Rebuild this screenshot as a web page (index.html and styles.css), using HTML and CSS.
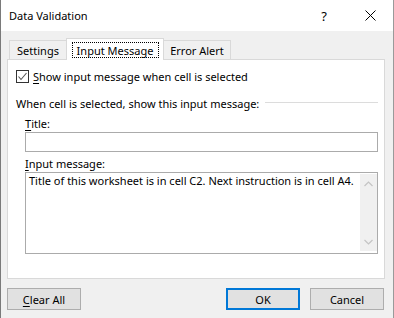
FILE: index.html
```html
<!DOCTYPE html>
<html>
<head>
    <title>Data Validation</title>
    <link rel="stylesheet" href="styles.css">
</head>
<body>
    <div class="window">
        <div class="title-bar">
            <span class="title">Data Validation</span>
            <div class="caption-buttons">
                <span class="caption-btn">?</span>
                <span class="caption-btn">
                    <svg width="11" height="11" viewBox="0 0 11 11">
                        <path d="M0.5 0.5 L10.5 10.5 M10.5 0.5 L0.5 10.5" stroke="#000" stroke-width="1" fill="none"/>
                    </svg>
                </span>
            </div>
        </div>

        <div class="main">
            <div class="tabs">
                <div class="tab tab-first">Settings</div>
                <div class="tab tab-active"><span class="focus">Input Message</span></div>
                <div class="tab tab-last">Error Alert</div>
            </div>

            <div class="panel">
                <div class="check-row">
                    <span class="checkbox">
                        <svg width="11" height="11" viewBox="0 0 11 11">
                            <polyline points="1.5,5.5 4,8.5 9.5,2" stroke="#555" stroke-width="1.1" fill="none"/>
                        </svg>
                    </span>
                    <span class="check-label"><u>S</u>how input message when cell is selected</span>
                </div>

                <div class="group-head">
                    <span>When cell is selected, show this input message:</span>
                    <span class="group-line"></span>
                </div>

                <div class="group-body">
                    <div class="field-label label-title"><u>T</u>itle:</div>
                    <div class="text-input"></div>

                    <div class="field-label label-msg"><u>I</u>nput message:</div>
                    <div class="msg-box">
                        <div class="msg-text">Title of this worksheet is in cell C2. Next instruction is in cell A4.</div>
                        <div class="scrollbar">
                            <svg width="9" height="6" viewBox="0 0 9 6">
                                <polyline points="0.5,5 4.5,1 8.5,5" stroke="#c4c4c4" stroke-width="1.2" fill="none"/>
                            </svg>
                            <svg width="9" height="6" viewBox="0 0 9 6">
                                <polyline points="0.5,1 4.5,5 8.5,1" stroke="#c4c4c4" stroke-width="1.2" fill="none"/>
                            </svg>
                        </div>
                    </div>
                </div>
            </div>

            <div class="button-row">
                <button class="btn"><u>C</u>lear All</button>
                <div class="spacer"></div>
                <button class="btn btn-default">OK</button>
                <button class="btn btn-cancel">Cancel</button>
            </div>
        </div>
    </div>
</body>
</html>
```
FILE: styles.css
```css
body {
    margin: 0;
    background-color: #f0f0f0;
    font-family: "Noto Sans", sans-serif;
    font-size: 11px;
    color: #000;
}

u {
    text-decoration: underline;
    text-underline-offset: 2px;
}

.window {
    width: 394px;
    height: 318px;
    box-sizing: border-box;
    border-left: 1px solid #7a7a7a;
    border-right: 1px solid #9a9a9a;
    background-color: #f0f0f0;
    overflow: hidden;
}

/* title bar */

.title-bar {
    height: 31px;
    background-color: #fff;
    display: flex;
    align-items: center;
    justify-content: space-between;
}

.title {
    padding-left: 8px;
    font-size: 11px;
    padding-bottom: 1px;
}

.caption-buttons {
    display: flex;
    height: 31px;
}

.caption-btn {
    width: 46px;
    height: 31px;
    display: flex;
    align-items: center;
    justify-content: center;
    font-size: 13px;
}

.caption-btn svg {
    margin-top: -1px;
}

/* tabs */

.main {
    padding: 7px 8px 0 6px;
}

.tabs {
    display: flex;
    align-items: flex-end;
    height: 21px;
    padding-left: 2px;
}

.tab {
    height: 19px;
    box-sizing: border-box;
    border: 1px solid #d9d9d9;
    border-bottom: none;
    display: flex;
    align-items: center;
    justify-content: center;
    padding-top: 1px;
    white-space: nowrap;
    background-color: #f0f0f0;
}

.tab-first {
    width: 57px;
    border-right: none;
}

.tab-active {
    width: 98px;
    height: 22px;
    margin-bottom: -1px;
    background-color: #fff;
    position: relative;
    z-index: 1;
    align-items: flex-start;
    padding-top: 3px;
}

.tab-last {
    width: 67px;
    border-left: none;
}

.focus {
    width: 87px;
    height: 16px;
    box-sizing: border-box;
    border: 1px dotted #000;
    display: flex;
    align-items: center;
    justify-content: center;
    white-space: nowrap;
}

/* panel */

.panel {
    height: 220px;
    box-sizing: border-box;
    border: 1px solid #d9d9d9;
    background-color: #fff;
    padding: 10px 6px 0 0;
}

.check-row {
    display: flex;
    align-items: center;
    height: 13px;
    padding-left: 8px;
}

.checkbox {
    width: 13px;
    height: 13px;
    box-sizing: border-box;
    border: 1px solid #333;
    background-color: #fff;
    display: flex;
    align-items: center;
    justify-content: center;
}

.check-label {
    margin-left: 4px;
}

.group-head {
    display: flex;
    align-items: center;
    height: 16px;
    margin-top: 12px;
    padding-left: 8px;
}

.group-line {
    flex: 1;
    height: 1px;
    margin-left: 6px;
    margin-top: -1px;
    background-color: #dcdcdc;
}

.group-body {
    padding-left: 17px;
}

.field-label {
    height: 16px;
    display: flex;
    align-items: center;
}

.label-title {
    margin-top: 4px;
}

.label-msg {
    margin-top: 3px;
}

.text-input {
    height: 20px;
    margin-top: 1px;
    box-sizing: border-box;
    border: 1px solid #ababab;
    background-color: #fff;
}

.msg-box {
    height: 82px;
    margin-top: 1px;
    box-sizing: border-box;
    border: 1px solid #ababab;
    background-color: #fff;
    display: flex;
}

.msg-text {
    flex: 1;
    padding: 0 3px;
    line-height: 16px;
}

.scrollbar {
    width: 17px;
    margin: 1px 0 2px;
    background-color: #f0f0f0;
    display: flex;
    flex-direction: column;
    justify-content: space-between;
    align-items: center;
    padding: 7px 0 6px;
    box-sizing: border-box;
}

/* buttons */

.button-row {
    display: flex;
    margin-top: 9px;
    padding-right: 1px;
}

.spacer {
    flex: 1;
}

.btn {
    width: 74px;
    height: 22px;
    box-sizing: border-box;
    border: 1px solid #adadad;
    background-color: #e1e1e1;
    font-family: "Noto Sans", sans-serif;
    font-size: 11px;
    color: #000;
    padding: 0;
    margin: 0;
}

.btn-default {
    border: 2px solid #0078d7;
}

.btn-cancel {
    margin-left: 10px;
}
```
